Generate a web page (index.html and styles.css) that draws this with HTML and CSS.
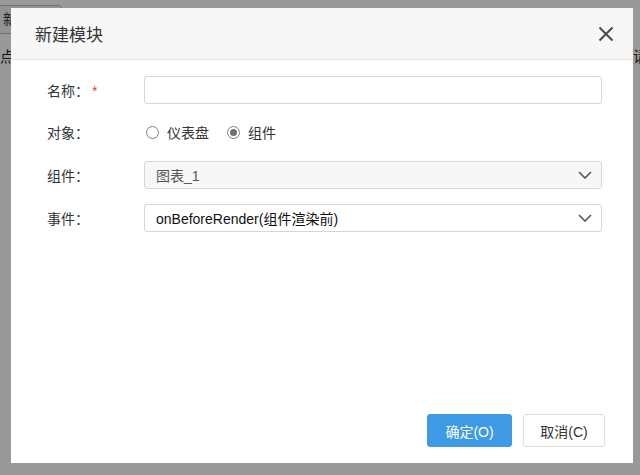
FILE: index.html
```html
<!DOCTYPE html>
<html>
<head>
<meta charset="utf-8">
<link rel="stylesheet" href="styles.css">
</head>
<body>
<div class="page">
  <div class="tabbar"><div class="tab">新建</div></div>
  <div class="page-row"><span class="cut-left">节点</span><span class="cut-right">请</span></div>
</div>
<div class="mask"></div>
<div class="dialog">
  <div class="dlg-head">
    <span class="dlg-title">新建模块</span>
    <svg class="close" width="16" height="16" viewBox="0 0 16 16"><path d="M1.5 1.5 L14.5 14.5 M14.5 1.5 L1.5 14.5" stroke="#4a4a55" stroke-width="2" fill="none"/></svg>
  </div>
  <div class="dlg-body">
    <div class="row r1">
      <label class="lbl">名称：<span class="req">*</span></label>
      <div class="field"><div class="input"></div></div>
    </div>
    <div class="row r2">
      <label class="lbl">对象：</label>
      <div class="field radios">
        <span class="radio"></span><span class="rtext">仪表盘</span>
        <span class="radio on"></span><span class="rtext">组件</span>
      </div>
    </div>
    <div class="row r3">
      <label class="lbl">组件：</label>
      <div class="field"><div class="select disabled"><span>图表_1</span>
        <svg class="chev" width="14" height="8" viewBox="0 0 14 8"><path d="M1 1 L7 7 L13 1" stroke="#555" stroke-width="1.6" fill="none"/></svg></div></div>
    </div>
    <div class="row r4">
      <label class="lbl">事件：</label>
      <div class="field"><div class="select"><span>onBeforeRender(组件渲染前)</span>
        <svg class="chev" width="14" height="8" viewBox="0 0 14 8"><path d="M1 1 L7 7 L13 1" stroke="#555" stroke-width="1.6" fill="none"/></svg></div></div>
    </div>
  </div>
  <div class="dlg-foot">
    <button class="btn primary">确定(O)</button>
    <button class="btn">取消(C)</button>
  </div>
</div>
</body>
</html>
```
FILE: styles.css
```css
* { box-sizing: border-box; }
html, body { margin: 0; padding: 0; }
body {
  width: 640px; height: 475px; overflow: hidden; background: #fff;
  font-family: "Liberation Sans", "Noto Sans CJK SC", sans-serif;
  font-size: 14px; color: #333; position: relative;
}
.page { height: 475px; }
.tabbar { padding-top: 5px; height: 34px; }
.tab {
  width: 74px; height: 29px; margin-left: -12px;
  border: 1px solid #bbb; border-radius: 3px; background: #f6f6f6;
  padding-left: 14px; line-height: 27px; font-size: 14px; color: #333;
}
.page-row {
  display: flex; justify-content: space-between; margin-top: 13px;
  font-size: 15px; line-height: 20px; color: #222;
}
.cut-left { margin-left: -15px; }
.cut-right { margin-right: -8px; }
.mask { position: absolute; inset: 0; background: rgba(0,0,0,0.4); }
.dialog {
  position: absolute; left: 11px; top: 8px; width: 622px; height: 455px;
  background: #fff; display: flex; flex-direction: column;
}
.dlg-head {
  height: 52px; background: #f7f7f7; border-bottom: 1px solid #e6e6e6;
  display: flex; align-items: center; justify-content: space-between;
  padding: 0 19px 0 24px;
}
.dlg-title { font-size: 17px; color: #333; }
.close { display: block; margin-top: 1px; }
.dlg-body { flex: 1; padding: 16px 31px 0 36px; }
.row { display: flex; align-items: center; height: 28px; }
.r2 { margin-top: 14px; }
.r3 { margin-top: 15px; }
.r4 { margin-top: 15px; }
.lbl { width: 97px; color: #333; font-size: 14px; }
.req { color: #e8413b; margin-left: 3px; }
.field { flex: 1; height: 28px; }
.input { height: 28px; border: 1px solid #d6d6d6; border-radius: 3px; background: #fff; }
.radios { display: flex; align-items: center; }
.radio {
  width: 13px; height: 13px; border: 1px solid #808080; border-radius: 50%;
  margin-left: 2px; position: relative; background: #fff;
}
.radio.on::after {
  content: ""; position: absolute; left: 2px; top: 2px; width: 7px; height: 7px;
  border-radius: 50%; background: #707070;
}
.rtext { margin-left: 8px; margin-right: 16px; color: #333; }
.select {
  height: 28px; border: 1px solid #d6d6d6; border-radius: 3px; background: #fff;
  display: flex; align-items: center; justify-content: space-between;
  padding: 0 9px 0 11px; color: #111; font-size: 14px;
}
.select.disabled { background: #f7f7f7; color: #555; }
.chev { display: block; }
.dlg-foot {
  display: flex; justify-content: flex-end; gap: 11px;
  padding: 0 28px 16px 0;
}
.btn {
  height: 33px; border: 1px solid #ddd; border-radius: 3px; background: #fff;
  font-family: "Liberation Sans", "Noto Sans CJK SC", sans-serif; font-size: 14px;
  color: #333; width: 82px; padding: 0;
}
.btn.primary { background: #3f9ae6; border-color: #3f9ae6; color: #fff; width: 85px; }
```
